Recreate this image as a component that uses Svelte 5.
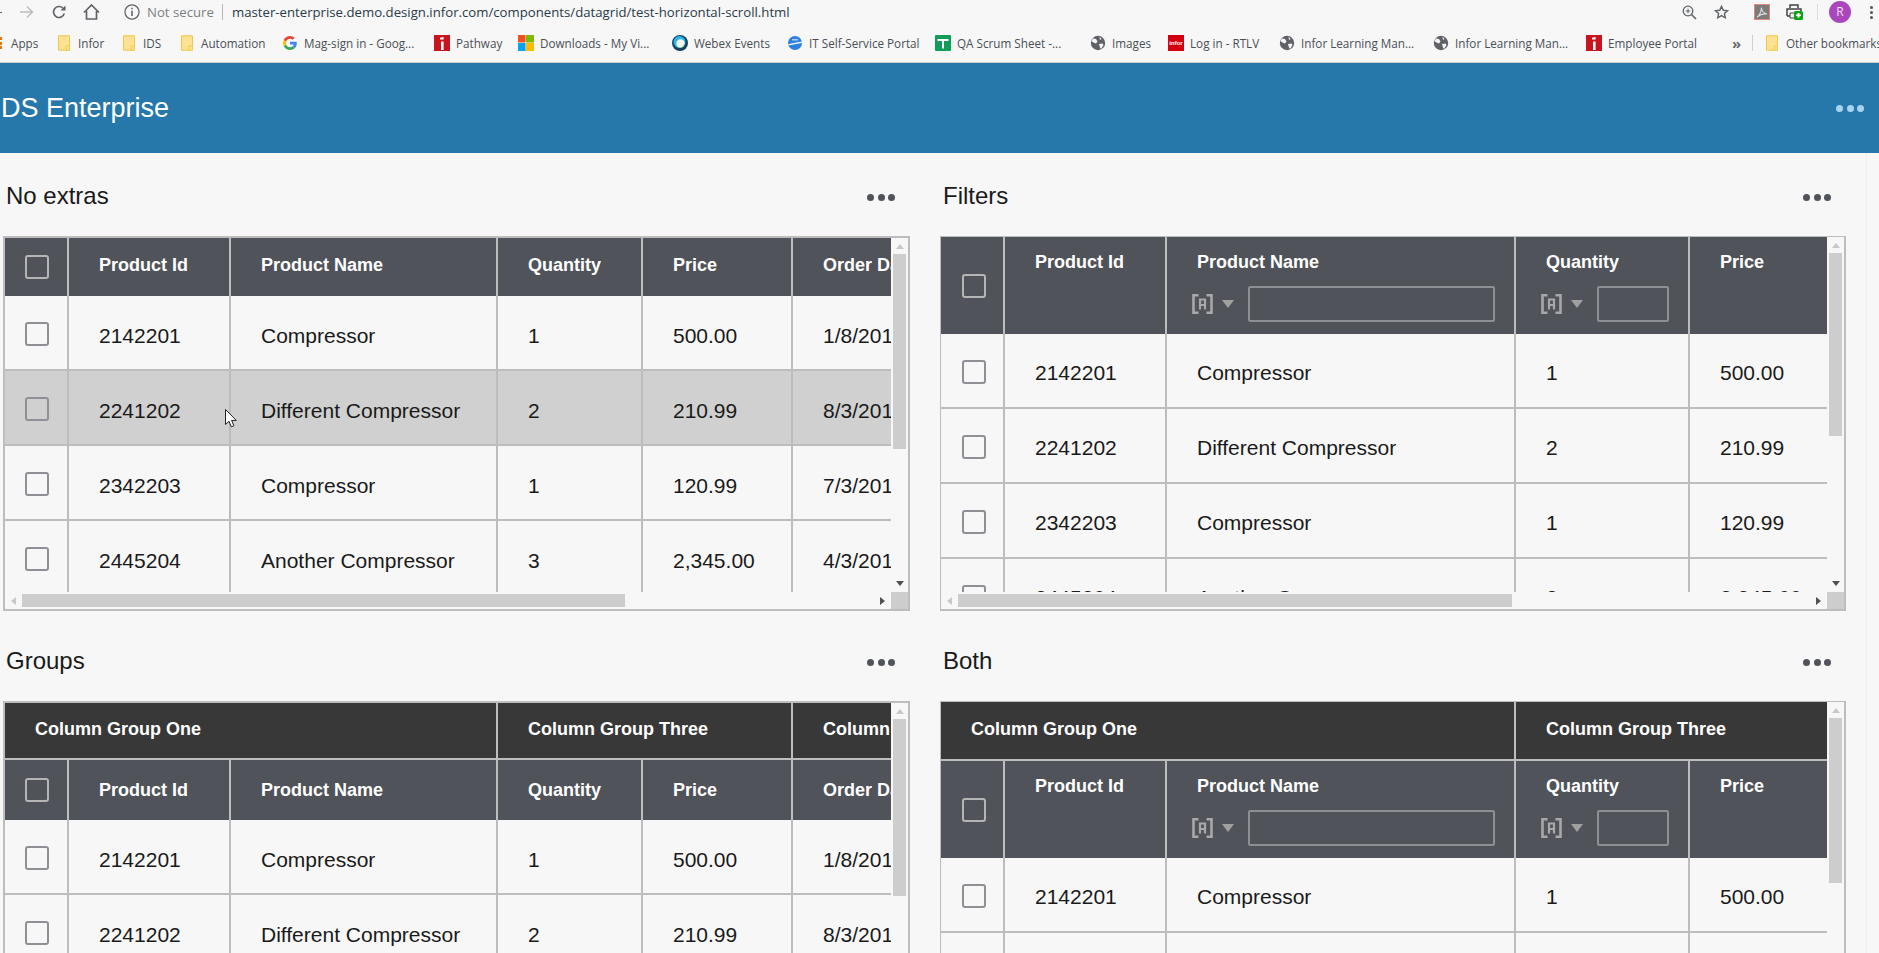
<script>
  // bookmark bar: x of the icon slot is set by each item's width
  const bookmarks = [
    { icon: "folder", label: "Infor", width: 65 },
    { icon: "folder", label: "IDS", width: 58 },
    { icon: "folder", label: "Automation", width: 103 },
    { icon: "g", label: "Mag-sign in - Goog...", width: 152 },
    { icon: "red", label: "Pathway", width: 84 },
    { icon: "ms", label: "Downloads - My Vi...", width: 154 },
    { icon: "webex", label: "Webex Events", width: 115 },
    { icon: "it", label: "IT Self-Service Portal", width: 148 },
    { icon: "sheet", label: "QA Scrum Sheet -...", width: 155 },
    { icon: "globe", label: "Images", width: 78 },
    { icon: "infor", label: "Log in - RTLV", width: 111 },
    { icon: "globe", label: "Infor Learning Man...", width: 154 },
    { icon: "globe", label: "Infor Learning Man...", width: 153 },
    { icon: "red", label: "Employee Portal", width: 147 }
  ];

  const rows = [
    { id: "2142201", name: "Compressor", qty: "1", price: "500.00", date: "1/8/2019" },
    { id: "2241202", name: "Different Compressor", qty: "2", price: "210.99", date: "8/3/2019" },
    { id: "2342203", name: "Compressor", qty: "1", price: "120.99", date: "7/3/2019" },
    { id: "2445204", name: "Another Compressor", qty: "3", price: "2,345.00", date: "4/3/2019" },
    { id: "2542205", name: "I Love Compressors", qty: "4", price: "2,445.00", date: "6/3/2019" }
  ];

  const plainCols = [64, 162, 267, 145, 150, 200];
  const filterCols = [64, 162, 349, 174, 200];

  const panels = [
    { title: "No extras", cols: plainCols, vThumb: 195, hThumb: 603, hover: 1 },
    { title: "Filters", cols: filterCols, filters: true, vThumb: 183, hThumb: 554 },
    { title: "Groups", cols: plainCols, vThumb: 177, hThumb: 603,
      groups: [["Column Group One", 493], ["Column Group Three", 295], ["Column Group Four", 200]] },
    { title: "Both", cols: filterCols, filters: true, vThumb: 165, hThumb: 554,
      groups: [["Column Group One", 575], ["Column Group Three", 374]] }
  ];

  const columns = [
    { key: "id", label: "Product Id" },
    { key: "name", label: "Product Name", filter: true },
    { key: "qty", label: "Quantity", filter: true },
    { key: "price", label: "Price" },
    { key: "date", label: "Order Date" }
  ];
</script>

{#snippet bookmarkIcon(kind)}
  <svg class="bm-icon" viewBox="0 0 16 16" width="16" height="16">
    {#if kind === "folder"}
      <path d="M2.5 .8h11v14.4h-11z" fill="#fde293" stroke="#f2c648" />
      <path d="M10 11h3.500v4H10z" fill="#fde293" stroke="#f2c648" stroke-width=".8" />
    {:else if kind === "g"}
      <path d="M14.800 8.200c0-.6-.1-1.100-.2-1.500H8v2.800h3.800c-.2.900-.7 1.600-1.400 2.100l2.200 1.700c1.400-1.200 2.200-3 2.200-5.100z" fill="#4285f4" />
      <path d="M8 15c1.900 0 3.500-.6 4.600-1.700l-2.200-1.700c-.6.400-1.400.7-2.400.7-1.800 0-3.400-1.200-3.900-2.900L1.800 11.200C3 13.500 5.300 15 8 15z" fill="#34a853" />
      <path d="M4.100 9.400C3.800 8.500 3.800 7.500 4.100 6.600L1.800 4.800c-1 1.900-1 4.500 0 6.400z" fill="#fbbc05" />
      <path d="M8 3.800c1 0 1.900.4 2.600 1l2-2C11.400 1.700 9.800 1 8 1 5.300 1 3 2.500 1.800 4.800l2.300 1.800C4.600 5 6.200 3.800 8 3.800z" fill="#ea4335" />
    {:else if kind === "red"}
      <rect width="16" height="16" fill="#c8141f" />
      <path d="M7 6.500h2.600V15H7z M6 2.800l3.600-.8v2.600H6z" fill="#fff" />
    {:else if kind === "ms"}
      <rect width="7.500" height="7.500" fill="#f25022" />
      <rect x="8" width="8" height="7.500" fill="#7fba00" />
      <rect y="8" width="7.500" height="8" fill="#00a4ef" />
      <rect x="8" y="8" width="8" height="8" fill="#ffb900" />
    {:else if kind === "webex"}
      <circle cx="8" cy="8" r="8" fill="#16405f" />
      <circle cx="7.500" cy="7" r="6" fill="#2bb5e5" />
      <circle cx="8.500" cy="8.500" r="4.200" fill="#f4f7ef" />
      <path d="M12.500 8a5 5 0 0 1-6 5c3 0 5-2 6-5z" fill="#6fb33f" />
    {:else if kind === "it"}
      <circle cx="8" cy="8" r="7" fill="#2f7fdc" />
      <path d="M.5 9.500C5 8 11 7 15.500 6.500v1.500C11 8.500 5 10 .5 10.500z" fill="#eaf3fb" />
      <path d="M5 4h6v1.500H5z" fill="#a9d0f3" />
    {:else if kind === "sheet"}
      <rect width="16" height="16" rx="1" fill="#0f9d58" />
      <path d="M2.500 4h11v2H9v7.500H7V6H2.500z" fill="#fff" />
    {:else if kind === "infor"}
      <rect width="16" height="16" fill="#d4000f" />
      <text x="8" y="10" class="infor-mark">infor</text>
    {:else}
      <circle cx="8" cy="8" r="7.200" fill="#5f6368" />
      <path d="M3 3.500l3 .5 1.500 2.500L6 8.500 3.500 7.500 1.500 6zM9.500 1.500l2 2.500-1.500 1zM9 9l3.500-.5 1 1.500-2.500 4-1-1.500z" fill="#f7f7f7" />
    {/if}
  </svg>
{/snippet}

{#snippet checkbox(head)}
  <span class="check" class:head></span>
{/snippet}

{#snippet dots()}
  <span class="dots"><i></i><i></i><i></i></span>
{/snippet}

<div class="chrome">
  <div class="toolbar">
    <span class="back"></span>
    <svg class="ic forward" viewBox="0 0 14 14" width="14" height="14"><path d="M0 7h12.500M7 1.500 12.500 7 7 12.500" fill="none" stroke="#bdbdbd" stroke-width="1.500" /></svg>
    <svg class="ic reload" viewBox="0 0 14 14" width="14" height="14"><path d="M12.300 8.500A5.500 5.500 0 1 1 11 3.200" fill="none" stroke="#5f6368" stroke-width="1.600" /><path d="M13.500 .5v5h-5z" fill="#5f6368" /></svg>
    <svg class="ic home" viewBox="0 0 17 16" width="17" height="16"><path d="M1 8.500 8.500 1 16 8.500M3.500 7v8h10V7" fill="none" stroke="#5f6368" stroke-width="1.700" /></svg>
    <svg class="ic info" viewBox="0 0 14 14" width="16" height="16"><circle cx="7" cy="7" r="6.200" fill="none" stroke="#5f6368" stroke-width="1.100" /><path d="M6.300 6h1.400v4.500H6.300zM6.300 3.300h1.400v1.400H6.300z" fill="#5f6368" /></svg>
    <span class="secure">Not secure</span>
    <span class="sep"></span>
    <span class="url">master-enterprise.demo.design.infor.com/components/datagrid/test-horizontal-scroll.html</span>

    <svg class="ic zoom" viewBox="0 0 15 15" width="15" height="15"><circle cx="6" cy="6" r="4.800" fill="none" stroke="#5f6368" stroke-width="1.300" /><path d="M9.500 9.500 14 14" stroke="#5f6368" stroke-width="1.600" /><path d="M3.700 6h4.600M6 3.700v4.600" stroke="#5f6368" /></svg>
    <svg class="ic star" viewBox="0 0 16 15" width="15" height="14"><path d="M8 1.500l1.900 4.200 4.600.5-3.400 3 1 4.500L8 11.400l-4.100 2.300 1-4.500-3.400-3 4.600-.5z" fill="none" stroke="#5f6368" stroke-width="1.500" /></svg>
    <svg class="ic pdf" viewBox="0 0 16 16" width="16" height="16"><rect x=".5" y=".5" width="15" height="15" fill="#7b7b7b" stroke="#e0867a" /><path d="M3 13c2-1 4-5 4.500-9.500 0 3 2 6 5.500 6.500-3-.5-7 .5-10 3z" fill="none" stroke="#dcdcdc" stroke-width="1.100" /></svg>
    <svg class="ic printer" viewBox="0 0 17 16" width="17" height="16"><path d="M4 4V1h8v3M1 12V5h14v3M1 12h7" fill="none" stroke="#444" stroke-width="1.500" /><path d="M4 9h5v5H4z" fill="#eee" stroke="#444" /><rect x="8" y="7" width="9" height="9" rx="1.500" fill="#0aa510" /><path d="M11.500 9h2v1.500H15v1.500h-1.500v1.500h-2V12H10v-1.500h1.500z" fill="#fff" /></svg>
    <span class="sep tool-sep"></span>
    <span class="avatar">R</span>
    <span class="kebab"><i></i><i></i><i></i></span>
  </div>

  <div class="bookmarks">
    <span class="apps-grid"></span>
    <span class="apps">Apps</span>
    {#each bookmarks as mark}
      <span class="bm" style="width: {mark.width}px">
        {@render bookmarkIcon(mark.icon)}
        <span>{mark.label}</span>
      </span>
    {/each}
    <span class="more">»</span>
    <span class="sep bm-sep"></span>
    <span class="bm other">
      {@render bookmarkIcon("folder")}
      <span>Other bookmarks</span>
    </span>
  </div>
</div>

<header class="app-bar">
  <span>DS Enterprise</span>
  {@render dots()}
</header>

<main>
  {#each panels as panel, p}
    <section class="panel" class:lower={p > 1} class:right={p % 2 === 1}>
      <div class="panel-title">
        <h2>{panel.title}</h2>
        {@render dots()}
      </div>

      <div class="grid">
        <div class="viewport">
          {#if panel.groups}
            <div class="group-row" class:tall={panel.filters}>
              {#each panel.groups as [label, width]}
                <div class="group-cell" style="width: {width}px">{label}</div>
              {/each}
            </div>
          {/if}

          <div class="head-row" class:with-filters={panel.filters} class:under-groups={panel.groups}>
            <div class="cell check-cell" style="width: {panel.cols[0]}px">{@render checkbox(true)}</div>
            {#each columns as col, c}
              <div class="cell head-cell" style="width: {panel.cols[c + 1]}px">
                <span class="label">{col.label}</span>
                {#if panel.filters && col.filter}
                  <div class="filter">
                    <svg viewBox="0 0 21 20" width="21" height="20">
                      <path d="M6.500 1.200H1.500v17.600h5M14.500 1.200h5v17.600h-5" fill="none" stroke="#a8a8a8" stroke-width="2.600" />
                      <path d="M8 15.500V5.500h5v10M8 11h5" fill="none" stroke="#a8a8a8" stroke-width="2.200" />
                    </svg>
                    <span class="caret"></span>
                    <span class="filter-input"></span>
                  </div>
                {/if}
              </div>
            {/each}
          </div>

          {#each rows as row, r}
            <div class="row" class:hovered={panel.hover === r}>
              <div class="cell check-cell" style="width: {panel.cols[0]}px">{@render checkbox(false)}</div>
              {#each columns as col, c}
                <div class="cell" style="width: {panel.cols[c + 1]}px">{row[col.key]}</div>
              {/each}
              {#if panel.hover === r}
                <svg class="cursor" viewBox="0 0 12 19" width="12" height="19"><path d="M.5.500v15l3.500-3.200 2.300 5.500 2.600-1.100-2.300-5.300h4.700z" fill="#fff" stroke="#222" /></svg>
              {/if}
            </div>
          {/each}
        </div>

        <div class="vbar">
          <span class="arrow up"></span>
          <span class="thumb" style="height: {panel.vThumb}px"></span>
          <span class="arrow down"></span>
        </div>
        <div class="hbar">
          <span class="arrow left"></span>
          <span class="thumb" style="width: {panel.hThumb}px"></span>
          <span class="arrow next"></span>
        </div>
        <div class="corner"></div>
      </div>
    </section>
  {/each}
</main>

<style>
  :global(html), :global(body) {
    height: 953px;
    overflow: hidden;
    background: #f7f7f7;
  }

  /* browser chrome */
  .chrome {
    height: 62px;
    background: #f7f7f7;
    border-bottom: 1px solid #cfcfcf;
    font-family: "Open Sans", sans-serif;
    color: #4a4f55;
  }
  .toolbar {
    height: 24px;
    display: flex;
    align-items: center;
    font-size: 13.200px;
  }
  .ic { flex: none; }
  .back { width: 2px; height: 1px; background: #5f6368; }
  .forward { margin-left: 18px; }
  .reload { margin-left: 18px; }
  .home { margin-left: 17px; }
  .info { margin-left: 24px; }
  .secure { margin-left: 7px; width: 69px; color: #7b7f84; white-space: nowrap; }
  .sep { flex: none; width: 1px; height: 16px; background: #b5b5b5; margin-left: 6px; }
  .url { margin-left: 9px; color: #2b3b47; white-space: nowrap; }
  .zoom { margin-left: auto; }
  .star { margin-left: 17px; }
  .pdf { margin-left: 25px; }
  .printer { margin-left: 16px; }
  .tool-sep { margin-left: 14px; background: #dcdcdc; }
  .avatar {
    flex: none;
    width: 22px;
    height: 22px;
    margin-left: 11px;
    border-radius: 50%;
    background: #ab47bc;
    color: #f3dff6;
    font-size: 12px;
    text-align: center;
    line-height: 22px;
  }
  .kebab { display: flex; flex-direction: column; gap: 2px; margin: 0 6px 0 19px; }
  .kebab i { width: 3px; height: 3px; border-radius: 50%; background: #4f5358; }

  .bookmarks {
    height: 38px;
    display: flex;
    align-items: center;
    font-size: 11.700px;
    white-space: nowrap;
    overflow: hidden;
  }
  .apps-grid {
    flex: none;
    width: 1.500px;
    height: 12px;
    background: repeating-linear-gradient(#e8710a 0 3px, #f7f7f7 3px 4.500px);
  }
  .apps { flex: none; margin-left: 9.500px; width: 45px; }
  .bm { flex: none; display: flex; align-items: center; gap: 6px; }
  .bm-icon { flex: none; }
  .infor-mark { font: bold 6px "Liberation Sans", sans-serif; fill: #fff; text-anchor: middle; }
  .more { flex: none; margin-left: -1px; width: 20px; font-size: 15px; font-weight: 700; color: #6a6a6a; }
  .bm-sep { margin-left: 0; height: 16px; background: #cfcfcf; }
  .other { margin-left: 11px; }

  .app-bar {
    height: 90px;
    padding: 0 15px 0 1px;
    display: flex;
    align-items: center;
    justify-content: space-between;
    background: #2578a9;
    color: #fff;
    font: 27px "Liberation Sans", sans-serif;
  }
  .app-bar .dots i { background: #a9d4ef; }

  .dots { display: flex; gap: 3.500px; }
  .dots i { width: 7px; height: 7px; border-radius: 50%; background: #50535a; }

  /* page */
  main {
    display: grid;
    grid-template-columns: 907px 906px;
    column-gap: 30px;
    width: 1867px;
    padding-left: 3px;
    box-sizing: border-box;
    border-right: 1px solid #efefef;
    font-family: "Liberation Sans", sans-serif;
    color: #1a1a1a;
  }
  .panel.lower { margin-top: 7px; }
  .panel-title {
    height: 83px;
    box-sizing: border-box;
    padding: 0 15px 0 3px;
    display: flex;
    align-items: center;
    justify-content: space-between;
  }
  .panel-title .dots { margin-top: 6px; }
  h2 { margin: 3px 0 0; font-size: 24px; font-weight: 400; }

  .grid {
    height: 375px;
    box-sizing: border-box;
    border: 2px solid #bdbdbd;
    display: grid;
    grid-template-columns: 1fr 17px;
    grid-template-rows: 1fr 17px;
  }
  .right .grid { border-width: 1.500px 2px 2px 1px; }
  .viewport { overflow: hidden; min-width: 0; min-height: 0; }

  .group-row {
    display: flex;
    width: max-content;
    height: 57px;
    background: #383838;
    border-bottom: 2px solid #bdbdbd;
    box-sizing: border-box;
  }
  .group-row.tall { height: 59px; }
  .group-cell {
    flex: none;
    box-sizing: border-box;
    padding: 0 0 3px 30px;
    display: flex;
    align-items: center;
    border-right: 2px solid #bdbdbd;
    color: #fff;
    font-size: 18px;
    font-weight: 700;
    white-space: nowrap;
    overflow: hidden;
  }

  .head-row, .row { display: flex; width: max-content; }
  .head-row { height: 58px; background: #50535a; color: #fff; font-size: 18px; font-weight: 700; }
  .head-row.under-groups { height: 60px; }
  .head-row.with-filters { height: 97px; }
  .row { position: relative; height: 75px; border-bottom: 2px solid #bdbdbd; box-sizing: border-box; font-size: 21px; }
  .row.hovered { background: #d0d0d0; }

  .cell {
    flex: none;
    box-sizing: border-box;
    padding: 7px 0 0 30px;
    display: flex;
    align-items: center;
    border-right: 2px solid #bdbdbd;
    white-space: nowrap;
    overflow: hidden;
  }
  .right .cell { padding-top: 5px; }
  .head-cell { padding: 0 0 3px 30px; }
  .under-groups .head-cell { padding-bottom: 0; }
  .check-cell { padding: 2px 0 0 20px; }
  .right .check-cell { padding: 2px 0 0 21px; }
  .head-row .check-cell, .right .head-row .check-cell { padding-top: 0; }
  .with-filters .head-cell, .right .with-filters .head-cell {
    padding: 16px 19px 0 0;
    flex-direction: column;
    align-items: stretch;
  }
  .with-filters .label { padding-left: 30px; line-height: 18px; }

  .check {
    width: 24px;
    height: 24px;
    box-sizing: border-box;
    border: 2px solid #8f9095;
    border-radius: 3px;
  }
  .check.head { border-color: #b5b5b5; }

  .filter { display: flex; align-items: center; margin-top: 15px; padding-left: 25px; }
  .caret {
    flex: none;
    margin: 0 14px 0 9px;
    border-left: 6.500px solid transparent;
    border-right: 6.500px solid transparent;
    border-top: 8px solid #a0a0a0;
  }
  .filter-input {
    flex: 1;
    height: 36px;
    box-sizing: border-box;
    border: 2px solid #8d8f94;
    border-radius: 2px;
  }

  .cursor { position: absolute; left: 220px; top: 38px; }

  /* scrollbars */
  .vbar, .hbar { display: flex; background: #f7f7f7; }
  .vbar { flex-direction: column; align-items: center; }
  .hbar { align-items: center; }
  .thumb { flex: none; background: #cdcdcd; }
  .vbar .thumb { width: 13px; }
  .hbar .thumb { height: 13px; }
  .arrow { flex: none; display: flex; width: 0; height: 0; box-sizing: content-box; }
  .up, .down { border-left: 4px solid transparent; border-right: 4px solid transparent; }
  .up { border-bottom: 5px solid #c8c8c8; margin: 6px 0 5px; }
  .down { border-top: 5px solid #505050; margin: auto 0 6px; }
  .left, .next { border-top: 4px solid transparent; border-bottom: 4px solid transparent; }
  .left { border-right: 5px solid #c8c8c8; margin: 0 6px; }
  .next { border-left: 5px solid #505050; margin: 0 6px 0 auto; }
  .corner { background: #cdcdcd; }
</style>
